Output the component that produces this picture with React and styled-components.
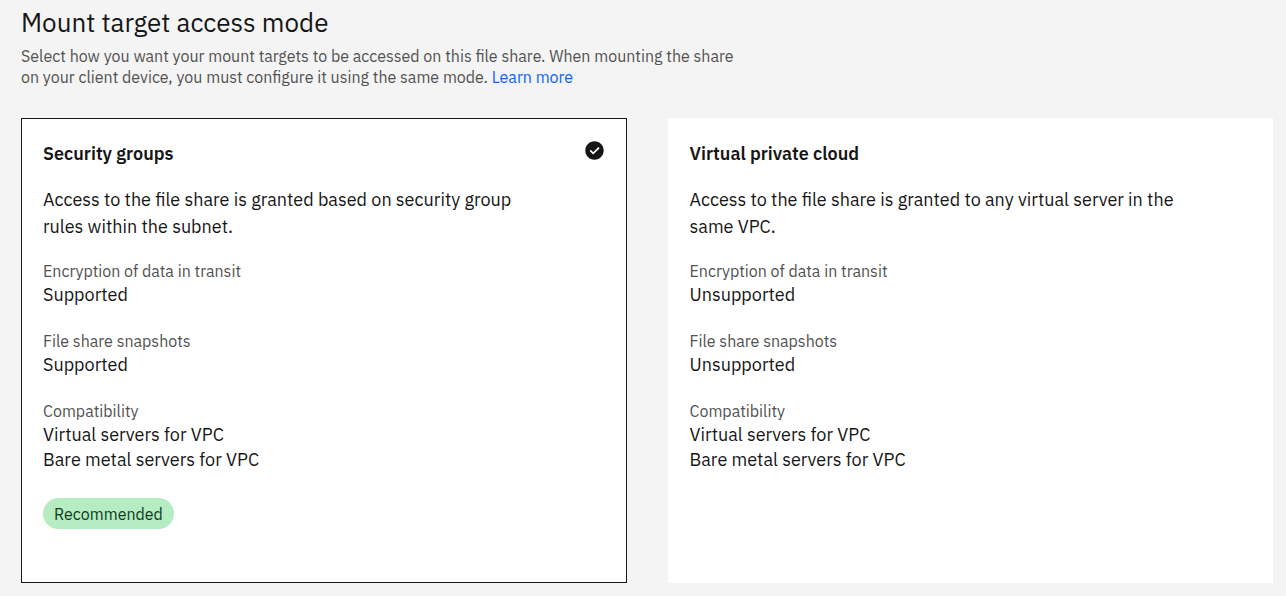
import React from "react";
import styled, { createGlobalStyle } from "styled-components";

const GlobalStyle = createGlobalStyle`
  *, *::before, *::after { box-sizing: border-box; }
  body {
    margin: 0;
    background: #f4f4f4;
    color: #161616;
    font-family: "IBM Plex Sans", "Noto Sans", "Open Sans", sans-serif;
  }
`;

const Section = styled.section`
  padding: 5px 13px 13px 21px;
`;

const Title = styled.h2`
  margin: 0;
  font-size: 26px;
  font-weight: 400;
  line-height: 34px;
`;

const Intro = styled.p`
  margin: 7px 0 0;
  max-width: 730px;
  font-size: 16px;
  line-height: 21px;
  color: #525252;
`;

const Link = styled.a`
  color: #0f62fe;
  text-decoration: none;
`;

const Options = styled.div`
  display: grid;
  grid-template-columns: 1fr 1fr;
  gap: 41px;
  margin-top: 30px;
`;

const Tile = styled.label`
  display: block;
  padding: 21px 21px 53px;
  background: #fff;
  border: 1px solid #fff;
  cursor: pointer;

  &:has(input:checked) { border-color: #161616; }
`;

const TileHeader = styled.div`
  display: flex;
  justify-content: space-between;
  align-items: flex-start;
`;

const Marker = styled.span`
  display: grid;
  width: 21px;
  height: 21px;

  > * { grid-area: 1 / 1; }
`;

const Radio = styled.input`
  appearance: none;
  width: 21px;
  height: 21px;
  margin: 0;
  border-radius: 50%;
  cursor: pointer;

  &:focus-visible { outline: 2px solid #0f62fe; }
`;

const CheckIcon = styled.svg`
  width: 21px;
  height: 21px;
  fill: #161616;
  visibility: hidden;
  pointer-events: none;

  input:checked + & { visibility: visible; }
`;

const TileTitle = styled.span`
  font-size: 18px;
  font-weight: 600;
  line-height: 28px;
`;

const Description = styled.p`
  margin: 18px 0 0;
  max-width: 500px;
  font-size: 18px;
  line-height: 27px;
`;

const Facts = styled.dl`
  display: grid;
  gap: 23px;
  margin: 20px 0 0;
`;

const Term = styled.dt`
  font-size: 16px;
  line-height: 22px;
  color: #525252;
`;

const Value = styled.dd`
  margin: 0;
  font-size: 18px;
  line-height: 25px;
`;

const Tag = styled.span`
  display: block;
  width: fit-content;
  margin-top: 26px;
  padding: 2px 11px 0;
  border-radius: 16px;
  background: #b5ecc1;
  color: #0e3b20;
  font-size: 16px;
  line-height: 29px;
`;

const options = [
  {
    id: "security-groups",
    title: "Security groups",
    description: "Access to the file share is granted based on security group rules within the subnet.",
    support: "Supported",
    tag: "Recommended",
  },
  {
    id: "vpc",
    title: "Virtual private cloud",
    description: "Access to the file share is granted to any virtual server in the same VPC.",
    support: "Unsupported",
  },
];

const compatibility = ["Virtual servers for VPC", "Bare metal servers for VPC"];

function Fact({ term, values }) {
  return (
    <div>
      <Term>{term}</Term>
      {values.map((value) => (
        <Value key={value}>{value}</Value>
      ))}
    </div>
  );
}

function OptionTile({ option, selected }) {
  return (
    <Tile>
      <TileHeader>
        <TileTitle>{option.title}</TileTitle>
        <Marker>
          <Radio type="radio" name="access-mode" value={option.id} defaultChecked={selected} />
          <CheckIcon viewBox="0 0 16 16" aria-hidden="true">
            <path d="M8,1C4.1,1,1,4.1,1,8c0,3.9,3.1,7,7,7s7-3.1,7-7C15,4.1,11.9,1,8,1z M7,11L4.3,8.3l0.9-0.8L7,9.3l4-3.9l0.9,0.8L7,11z" />
          </CheckIcon>
        </Marker>
      </TileHeader>
      <Description>{option.description}</Description>
      <Facts>
        <Fact term="Encryption of data in transit" values={[option.support]} />
        <Fact term="File share snapshots" values={[option.support]} />
        <Fact term="Compatibility" values={compatibility} />
      </Facts>
      {option.tag && <Tag>{option.tag}</Tag>}
    </Tile>
  );
}

export default function App() {
  return (
    <>
      <GlobalStyle />
      <Section>
        <Title id="access-mode-title">Mount target access mode</Title>
        <Intro>
          Select how you want your mount targets to be accessed on this file share. When mounting the share
          on your client device, you must configure it using the same mode. <Link href="#">Learn more</Link>
        </Intro>
        <Options role="radiogroup" aria-labelledby="access-mode-title">
          {options.map((option, index) => (
            <OptionTile key={option.id} option={option} selected={index === 0} />
          ))}
        </Options>
      </Section>
    </>
  );
}
